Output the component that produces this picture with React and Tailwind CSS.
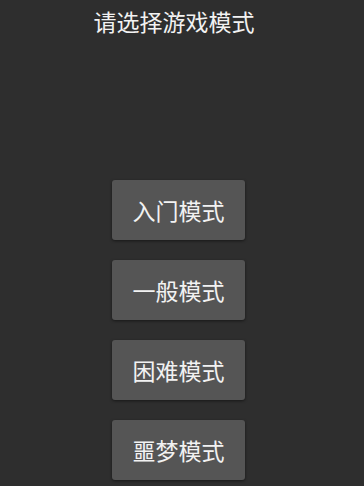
import React from 'react';

const modes = ["入门模式", "一般模式", "困难模式", "噩梦模式"];

const App = () => {
    return (
        <div className="w-[364px] h-[486px] bg-[#2e2e2e] flex flex-col items-center text-[#f2f2f2] overflow-hidden"
             style={{fontFamily: '"Noto Sans CJK SC", "Noto Sans", sans-serif'}}>
            <div className="mt-[5px] mr-[16px] text-[23px] leading-[32px]">请选择游戏模式</div>
            <div className="mt-[143px] mr-[7px] flex flex-col gap-[20px]">
                {modes.map((m, i) => (
                    <button key={i}
                            className="w-[133px] h-[60px] rounded-[3px] bg-[#555555] text-[#f2f2f2] text-[23px] shadow-[0_1px_3px_rgba(0,0,0,0.5)]">
                        {m}
                    </button>
                ))}
            </div>
        </div>
    );
};

export default App;
